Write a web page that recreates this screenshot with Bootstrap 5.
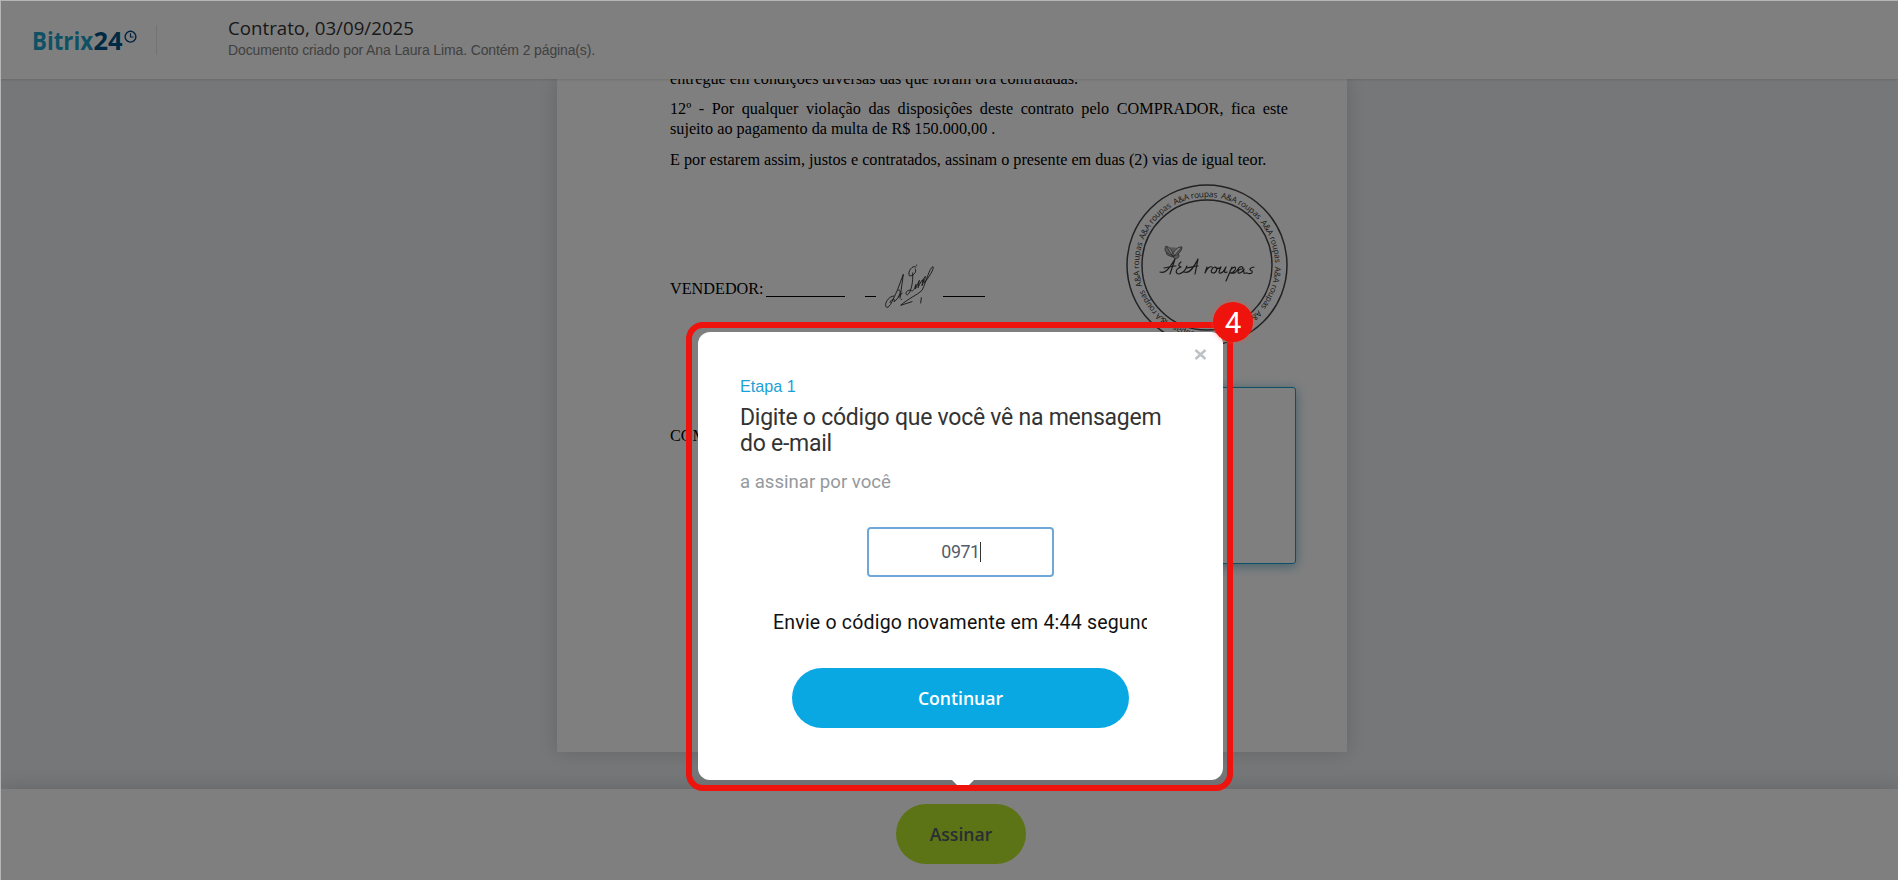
<!DOCTYPE html>
<html lang="pt-BR">
<head>
<meta charset="utf-8">
<title>Contrato, 03/09/2025</title>
<meta name="viewport" content="width=device-width, initial-scale=1">
<link href="https://cdn.jsdelivr.net/npm/bootstrap@5.3.0/dist/css/bootstrap.min.css" rel="stylesheet">
<script src="https://cdn.jsdelivr.net/npm/bootstrap@5.3.0/dist/js/bootstrap.bundle.min.js"></script>
<style>
body{background:#eceff2;font-family:"Open Sans",sans-serif;color:#333}
.topbar{height:79px;box-shadow:0 1px 2px rgba(0,0,0,.12);z-index:2;padding-left:33px}
.brand{width:104px;height:30px}
.divider{width:1px;height:30px;background:#e6e6e6;margin-left:19px}
.doc-head{margin-left:71px;padding-bottom:3px}
.doc-title{font-size:18.7px;line-height:24px}
.doc-sub{font:14px/20px "Liberation Sans",sans-serif;letter-spacing:-.13px;color:#828282}
.sheet{width:790px;height:673px;box-shadow:0 0 18px rgba(60,70,80,.22);margin-left:6px;padding:0 59px 0 113px;font:16.22px/20px "Liberation Serif",serif;color:#000}
.sheet p{margin:0 0 11px;text-align:justify}
.sheet .first{margin:-10px 0 10px}
.full-line{text-align-last:justify}
.sign-row{height:160px;margin-top:14px}
.lbl{width:96px}
.lbl-seller{padding-top:95px}
.lbl-buyer{padding-top:82px}
.sign-field{height:177px;border:1px solid #19a0cb;border-radius:3px;box-shadow:0 2px 12px rgba(0,120,170,.5);margin:43px -8px 0 0}
.bottombar{height:91px;box-shadow:0 -2px 18px rgba(60,70,80,.2);z-index:2;padding-bottom:1px}
.btn-sign{width:130px;height:60px;background:#b8e62c;color:#535c69;font-weight:600;font-size:17.6px}
.shade{background:rgba(0,0,0,.5);border-left:1px solid #b3b5b6;border-top:1px solid #b3b5b6;background-clip:padding-box;z-index:5}
.callout{left:686px;top:322px;width:547px;height:469px;border:6px solid #ee130d;border-radius:17px;padding:4px 4px 0 6px;z-index:6}
.step-num{width:40px;height:40px;background:#ee130d;color:#fff;font:29.5px/42px Roboto,sans-serif;right:-26px;top:-26px;box-shadow:0 0 4px rgba(255,80,60,.6)}
.dialog{width:525px;height:448px;border-radius:12px;font-family:Roboto,sans-serif;padding:44px 42px 0}
.tail{left:254px;bottom:-5px;width:22px;height:5px}
.close-x{right:16px;top:16px;width:13px;height:13px}
.step{font:16.2px/20px "Liberation Sans",sans-serif;color:#1ba1d8}
.ask{font-size:23px;line-height:26px;letter-spacing:-.25px;color:#333;margin-top:9px}
.who{font-size:18.6px;line-height:24px;color:#95999e;margin-top:13px}
.code{width:187px;height:50px;border:2px solid #6ea7d8;border-radius:4px;margin:33px auto 0;padding-left:1px;font-size:17.8px;letter-spacing:-.4px;color:#535c69}
.caret{width:1px;height:20px;background:#333}
.resend{width:374px;font-size:19.5px;letter-spacing:.2px;line-height:28px;color:#111;margin:32px 0 0 33px}
.btn-next{width:337px;height:60px;background:#0aa8e3;color:#fff;font:600 17.6px "Open Sans",sans-serif;margin:31px 0 0 52px}
</style>
</head>
<body class="vh-100 overflow-hidden position-relative d-flex flex-column">
<header class="topbar bg-white d-flex align-items-center position-relative flex-shrink-0">
  <svg class="brand" viewBox="0 0 104 30" font-family="Open Sans" font-weight="700" font-size="24.5">
    <text x="-1" y="24.800" textLength="61" lengthAdjust="spacingAndGlyphs" fill="#1fa3c9">Bitrix</text>
    <text x="60.500" y="24.800" textLength="29" lengthAdjust="spacingAndGlyphs" fill="#005287">24</text>
    <circle cx="97.5" cy="11.700" r="5.4" fill="none" stroke="#00457d" stroke-width="1.4"/><path d="M97.5 8.200V12H100.6" fill="none" stroke="#00457d" stroke-width="1.2"/>
  </svg>
  <div class="divider"></div>
  <div class="doc-head"><div class="doc-title">Contrato, 03/09/2025</div><div class="doc-sub">Documento criado por Ana Laura Lima. Contém 2 página(s).</div></div>
</header>

<main class="flex-grow-1 d-flex justify-content-center align-items-start overflow-hidden">
  <article class="sheet bg-white flex-shrink-0">
    <p class="first">entregue em condições diversas das que foram ora contratadas.</p>
    <p><span class="full-line d-block">12º - Por qualquer violação das disposições deste contrato pelo COMPRADOR, fica este</span> sujeito ao pagamento da multa de R$ 150.000,00 .</p>
    <p>E por estarem assim, justos e contratados, assinam o presente em duas (2) vias de igual teor.</p>
    <div class="sign-row d-flex">
      <div class="lbl lbl-seller">VENDEDOR:</div>
      <svg width="230" height="160" viewBox="766 183 230 160" fill="none" stroke="#222">
        <path d="M766 295.500h79M865 295.500h11M943 295.500h42" stroke="#000"/>
        <g transform="translate(870 250) scale(.3333)" stroke-width="2.600" stroke-linecap="round" stroke-linejoin="round">
          <path d="M72 135C55 134 40 162 50 169C60 172 70 142 82 118L100 70L90 142M60 155C66 140 76 142 72 152C80 148 86 136 97 126M84 118C92 112 94 128 84 138M94 145v1"/>
          <path d="M138 48C128 40 112 62 118 74C128 78 142 62 136 54M128 66C130 90 124 124 112 132C104 130 108 116 122 118C130 124 134 112 138 100L136 114C140 106 146 92 148 88L144 110C150 96 156 86 158 86L156 104C162 90 168 78 166 76C158 84 158 96 164 94"/>
          <path d="M164 94C176 80 194 52 189 47C178 50 170 90 156 118C142 132 112 144 92 163L126 152M154 140L152 156M140 42v1"/>
        </g>
      </svg>
      <svg class="ms-auto me-0" width="162" height="162" viewBox="-81 -81 162 162">
        <defs><path id="ring" d="M0 68A68 68 0 1 1 .1 68"/></defs>
        <circle r="80" fill="none" stroke="#444" stroke-width="1.5"/><circle r="65" fill="none" stroke="#444" stroke-width="1.500"/>
        <text transform="rotate(-8)" font-family="Open Sans" font-size="8.2" fill="#333"><textPath href="#ring" textLength="424">A&amp;A roupas&#160; A&amp;A roupas&#160; A&amp;A roupas&#160; A&amp;A roupas&#160; A&amp;A roupas&#160; A&amp;A roupas&#160; A&amp;A roupas&#160; A&amp;A roupas&#160; A&amp;A roupas&#160;</textPath></text>
        <g fill="none" stroke="#333" stroke-width="1.200" stroke-linecap="round" stroke-linejoin="round">
          <path d="M-47 7c5 2 9-3 15-13l-5 15M-43 3c5-1 8-2 12-2M-26-3c-3 2-3 4 0 5-6 2-6 7-2 7 4-1 7-5 8-8M-23 7c5 2 9-3 14-13l-3 15M-20 3c5-1 8-2 11-2"/>
          <path d="M0 2l-2 6c2-5 5-7 7-6M8 2c-4 1-5 6-2 6 4 0 5-6 2-6 2 2 4 2 6 0-2 4-3 7 0 6 3-1 4-4 5-6-2 4-2 7 1 5M25 2l-6 14M23 6c3-5 7-5 5-1-2 3-5 3-5 3 5 1 6-1 8-4 2-4 7-2 4 0-5 0-5 5-2 4 3-1 4-4 4-4-1 4 0 5 2 4M47 2c-5 1-5 3-2 4 1 3-3 3-5 2"/>
        </g>
        <path d="M-34-8c-8-2-7-4-6-4-3-2-2-6-1-7 4 1 6 5 7 8 2-5 7-8 9-7 0 4-3 6-4 7 3 2-1 6-4 4zM-40-18l6 10 8-9M-40-12l7 3 5-2" fill="#b0b0b0" stroke="#444" stroke-width=".7"/>
      </svg>
    </div>
    <div class="d-flex">
      <div class="lbl lbl-buyer flex-shrink-0">COMPRADOR:</div>
      <div class="sign-field flex-grow-1"></div>
    </div>
  </article>
</main>

<footer class="bottombar bg-white d-flex align-items-center justify-content-center position-relative flex-shrink-0 ps-4">
  <button class="btn btn-sign rounded-pill border-0 p-0">Assinar</button>
</footer>

<div class="shade position-absolute top-0 start-0 w-100 h-100"></div>

<div class="callout position-absolute">
  <section class="dialog bg-white position-relative">
    <svg class="close-x position-absolute" viewBox="0 0 13 13"><path d="M1.500 2L11.500 11M11.500 2L1.500 11" stroke="#bfc2c5" stroke-width="2.500"/></svg>
    <div class="step">Etapa 1</div>
    <div class="ask">Digite o código que você vê na mensagem<br>do e-mail</div>
    <div class="who">a assinar por você</div>
    <div class="code d-flex align-items-center justify-content-center">0971<span class="caret"></span></div>
    <div class="resend overflow-hidden text-nowrap">Envie o código novamente em 4:44 segundos</div>
    <button class="btn btn-next rounded-pill border-0 p-0 d-block">Continuar</button>
    <svg class="tail position-absolute" viewBox="0 0 22 5"><path d="M0 0H22L17 5H5Z" fill="#fff"/></svg>
  </section>
  <span class="step-num rounded-circle position-absolute text-center">4</span>
</div>
</body>
</html>
